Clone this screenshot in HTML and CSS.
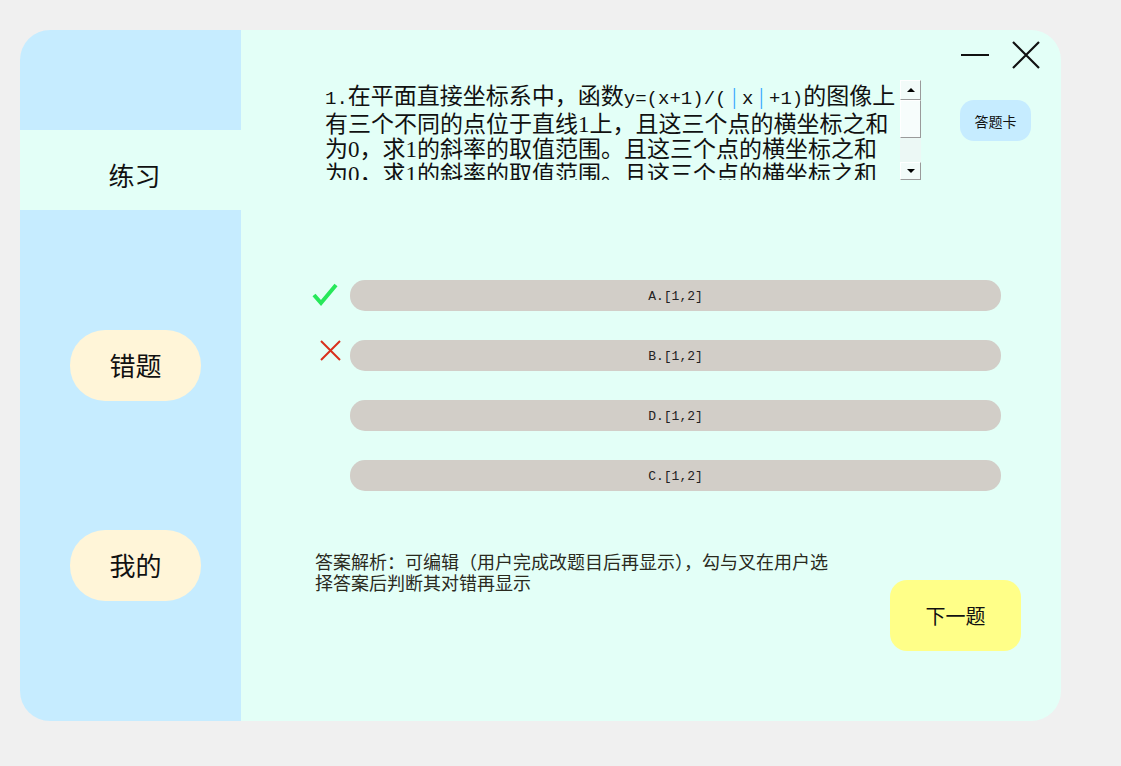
FILE: index.html
```html
<!DOCTYPE html>
<html lang="zh-CN">
<head>
<meta charset="utf-8">
<title>练习</title>
<link rel="stylesheet" href="styles.css">
</head>
<body>
<div class="window">
  <aside class="sidebar">
    <div class="nav-active">练习</div>
    <div class="nav-btn nav-first">错题</div>
    <div class="nav-btn nav-second">我的</div>
  </aside>
  <main class="main">
    <div class="controls">
      <svg class="ctl-min" width="30" height="4" viewBox="0 0 30 4"><line x1="1" y1="2" x2="29" y2="2" stroke="#111" stroke-width="2.2"/></svg>
      <svg class="ctl-close" width="30" height="30" viewBox="0 0 30 30"><path d="M2 2 L28 28 M28 2 L2 28" stroke="#111" stroke-width="2.2" fill="none"/></svg>
    </div>
    <div class="question-row">
      <div class="question-box">
        <div class="question-text">
          <div class="qline"><span class="lat">1.</span>在平面直接坐标系中，函数<span class="lat">y=(x+1)/(</span><span class="bar">|</span><span class="lat">x</span><span class="bar">|</span><span class="lat">+1)</span>的图像上</div>
          <div class="qline">有三个不同的点位于直线1上，且这三个点的横坐标之和</div>
          <div class="qline">为0，求1的斜率的取值范围。且这三个点的横坐标之和</div>
          <div class="qline">为0，求1的斜率的取值范围。且这三个点的横坐标之和</div>
        </div>
        <div class="scrollbar">
          <div class="sb-btn"><span class="arrow-up"></span></div>
          <div class="sb-thumb"></div>
          <div class="sb-track"></div>
          <div class="sb-btn"><span class="arrow-down"></span></div>
        </div>
      </div>
      <div class="card-btn">答题卡</div>
    </div>
    <div class="options">
      <div class="option-row">
        <div class="mark">
          <svg width="26" height="26" viewBox="0 0 26 26"><path d="M2 13 L9 21 L24 3" stroke="#27e85a" stroke-width="4" fill="none" stroke-linejoin="miter"/></svg>
        </div>
        <div class="option">A.[1,2]</div>
      </div>
      <div class="option-row">
        <div class="mark mark-x">
          <svg width="21" height="21" viewBox="0 0 21 21"><path d="M1 1 L20 20 M20 1 L1 20" stroke="#d9301c" stroke-width="2" fill="none"/></svg>
        </div>
        <div class="option">B.[1,2]</div>
      </div>
      <div class="option-row">
        <div class="mark"></div>
        <div class="option">D.[1,2]</div>
      </div>
      <div class="option-row">
        <div class="mark"></div>
        <div class="option">C.[1,2]</div>
      </div>
    </div>
    <div class="bottom-row">
      <p class="analysis">答案解析：可编辑（用户完成改题目后再显示），勾与叉在用户选<br>择答案后判断其对错再显示</p>
      <div class="next-btn">下一题</div>
    </div>
  </main>
</div>
</body>
</html>
```
FILE: styles.css
```css
html, body {
  margin: 0;
  padding: 0;
  background: #f0f0f0;
}
body {
  width: 1121px;
  height: 766px;
  overflow: hidden;
  font-family: "Liberation Serif", "Noto Sans CJK SC", serif;
  color: #111;
}
.window {
  margin: 30px 0 0 20px;
  width: 1041px;
  height: 691px;
  border-radius: 30px;
  overflow: hidden;
  display: flex;
}
.sidebar {
  width: 221px;
  flex: none;
  background: #c6ecff;
  display: flex;
  flex-direction: column;
  padding-top: 100px;
  box-sizing: border-box;
}
.nav-active {
  height: 80px;
  box-sizing: border-box;
  background: #e3fff7;
  display: flex;
  align-items: center;
  justify-content: center;
  padding-left: 8px;
  padding-top: 8px;
  font-family: "Noto Sans CJK SC", sans-serif;
  font-size: 26px;
  color: #111;
}
.nav-btn {
  width: 131px;
  height: 71px;
  margin-left: 50px;
  border-radius: 35px;
  background: #fff5d8;
  display: flex;
  align-items: center;
  justify-content: center;
  font-family: "Noto Sans CJK SC", sans-serif;
  font-size: 26px;
  color: #111;
  padding-bottom: 3px;
  box-sizing: border-box;
}
.nav-first { margin-top: 120px; }
.nav-second { margin-top: 129px; }

.main {
  flex: 1;
  background: #e3fff7;
  display: flex;
  flex-direction: column;
}
.controls {
  display: flex;
  justify-content: flex-end;
  align-items: center;
  gap: 21px;
  margin-top: 10px;
  padding-right: 20px;
  height: 30px;
}
.ctl-min { display: block; margin-top: 0; }
.ctl-close { display: block; }

.question-row {
  display: flex;
  align-items: flex-start;
  margin-top: 10px;
  padding-left: 84px;
}
.question-box {
  display: flex;
  height: 100px;
}
.question-text {
  width: 575px;
  height: 100px;
  overflow: hidden;
  padding-top: 4px;
  box-sizing: border-box;
  font-size: 23px;
  line-height: 25px;
  color: #111;
}
.qline { white-space: nowrap; }
.lat {
  font-family: "Liberation Mono", monospace;
  font-size: 19px;
}
.bar {
  color: #39a6ff;
  padding: 0 5.5px;
}
.scrollbar {
  width: 21px;
  height: 100px;
  display: flex;
  flex-direction: column;
}
.sb-btn {
  height: 20px;
  flex: none;
  background: #f2fbf9;
  border-top: 1px solid #fff;
  border-left: 1px solid #fff;
  border-right: 1px solid #9a9a9a;
  border-bottom: 1px solid #9a9a9a;
  box-sizing: border-box;
  display: flex;
  align-items: center;
  justify-content: center;
}
.sb-btn:last-child { height: 18px; }
.arrow-up {
  width: 0; height: 0;
  border-left: 4px solid transparent;
  border-right: 4px solid transparent;
  border-bottom: 4px solid #000;
}
.arrow-down {
  width: 0; height: 0;
  border-left: 4px solid transparent;
  border-right: 4px solid transparent;
  border-top: 4px solid #000;
}
.sb-thumb {
  height: 38px;
  flex: none;
  background: #f7fdfc;
  border-top: 1px solid #fff;
  border-left: 1px solid #fff;
  border-right: 1px solid #9a9a9a;
  border-bottom: 1px solid #9a9a9a;
  box-sizing: border-box;
}
.sb-track {
  flex: 1;
  background: #ecf8f5;
}
.card-btn {
  margin-left: 39px;
  margin-top: 20px;
  width: 71px;
  height: 41px;
  border-radius: 14px;
  background: #c6ecff;
  display: flex;
  align-items: center;
  justify-content: center;
  font-family: "Noto Sans CJK SC", sans-serif;
  font-size: 14px;
  color: #111;
}

.options {
  margin-top: 100px;
  display: flex;
  flex-direction: column;
  gap: 29px;
}
.option-row {
  display: flex;
  height: 31px;
  padding-left: 72px;
}
.mark {
  width: 37px;
  flex: none;
}
.mark svg {
  display: block;
  margin-top: 2px;
  margin-left: -1px;
}
.mark-x svg {
  margin-top: 0;
  margin-left: 7px;
}
.option {
  width: 651px;
  height: 31px;
  border-radius: 15px;
  background: #d2cec8;
  display: flex;
  align-items: center;
  justify-content: center;
  font-family: "Liberation Mono", monospace;
  font-size: 13px;
  color: #222;
  padding-top: 1px;
  box-sizing: border-box;
}

.bottom-row {
  display: flex;
  justify-content: space-between;
  align-items: flex-start;
  margin-top: 62px;
  padding-left: 74px;
  padding-right: 40px;
}
.analysis {
  margin: 0;
  font-size: 18px;
  line-height: 21px;
  color: #2a2a1e;
}
.next-btn {
  margin-top: 27px;
  width: 131px;
  height: 71px;
  border-radius: 17px;
  background: #ffff88;
  display: flex;
  align-items: center;
  justify-content: center;
  font-family: "Noto Sans CJK SC", sans-serif;
  font-size: 20px;
  color: #111;
}
```
